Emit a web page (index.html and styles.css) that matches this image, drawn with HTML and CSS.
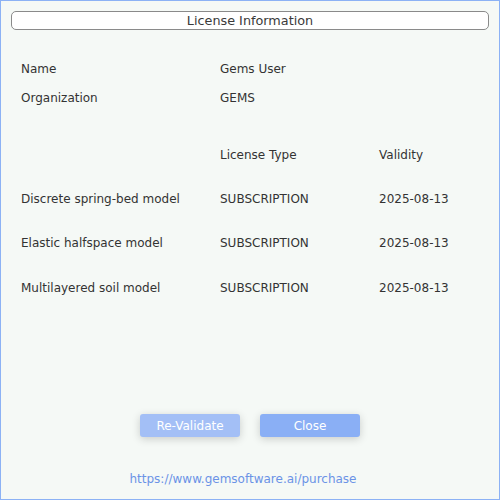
FILE: index.html
```html
<!DOCTYPE html>
<html>
<head>
<meta charset="utf-8">
<link rel="stylesheet" href="styles.css">
</head>
<body>
<div class="window">
  <div class="title">License Information</div>
  <div class="info">
    <div class="row r-name"><span class="c1">Name</span><span class="c2">Gems User</span></div>
    <div class="row r-org"><span class="c1">Organization</span><span class="c2">GEMS</span></div>
    <div class="row r-head"><span class="c1"></span><span class="c2">License Type</span><span class="c3">Validity</span></div>
    <div class="row r-data"><span class="c1">Discrete spring-bed model</span><span class="c2">SUBSCRIPTION</span><span class="c3">2025-08-13</span></div>
    <div class="row r-data"><span class="c1">Elastic halfspace model</span><span class="c2">SUBSCRIPTION</span><span class="c3">2025-08-13</span></div>
    <div class="row r-data r-last"><span class="c1">Multilayered soil model</span><span class="c2">SUBSCRIPTION</span><span class="c3">2025-08-13</span></div>
  </div>
  <div class="spacer"></div>
  <div class="buttons">
    <button class="btn btn-light">Re-Validate</button>
    <button class="btn btn-main">Close</button>
  </div>
  <div class="link">https://www.gemsoftware.ai/purchase</div>
</div>
</body>
</html>
```
FILE: styles.css
```css
html, body {
  margin: 0;
  padding: 0;
}
body {
  width: 500px;
  height: 500px;
  font-family: "DejaVu Sans", sans-serif;
  font-size: 12px;
  color: #333333;
}
.window {
  box-sizing: border-box;
  width: 500px;
  height: 500px;
  border: 1px solid #8cb2f5;
  background: #f5f9f6;
  display: flex;
  flex-direction: column;
  padding: 10px 10px 0 10px;
}
.title {
  height: 17px;
  border: 1px solid #8a8a8a;
  border-radius: 5px;
  background: #ffffff;
  text-align: center;
  line-height: 17px;
  font-size: 12.8px;
  color: #3a3a3a;
}
.info {
  padding-left: 10px;
  margin-top: 25px;
}
.row {
  display: flex;
  align-items: center;
  height: 28px;
}
.r-org {
  height: 30px;
}
.r-head {
  margin-top: 28px;
}
.r-data {
  margin-top: 16px;
}
.r-last {
  margin-top: 17px;
}
.c1 {
  width: 199px;
}
.c2 {
  width: 159px;
}
.spacer {
  flex: 1;
}
.buttons {
  display: flex;
  justify-content: center;
  gap: 20px;
  margin-bottom: 35px;
}
.btn {
  width: 100px;
  height: 23px;
  border: none;
  border-radius: 3px;
  color: #ffffff;
  font-family: "DejaVu Sans", sans-serif;
  font-size: 12px;
  padding: 0;
  box-shadow: 0 2px 8px rgba(0, 0, 0, 0.18);
}
.btn-light {
  background: #a3bff6;
}
.btn-main {
  background: #8aaff5;
}
.link {
  text-align: center;
  color: #6b93e6;
  padding-right: 14px;
  height: 14px;
  line-height: 14px;
  margin-bottom: 13px;
}
```
